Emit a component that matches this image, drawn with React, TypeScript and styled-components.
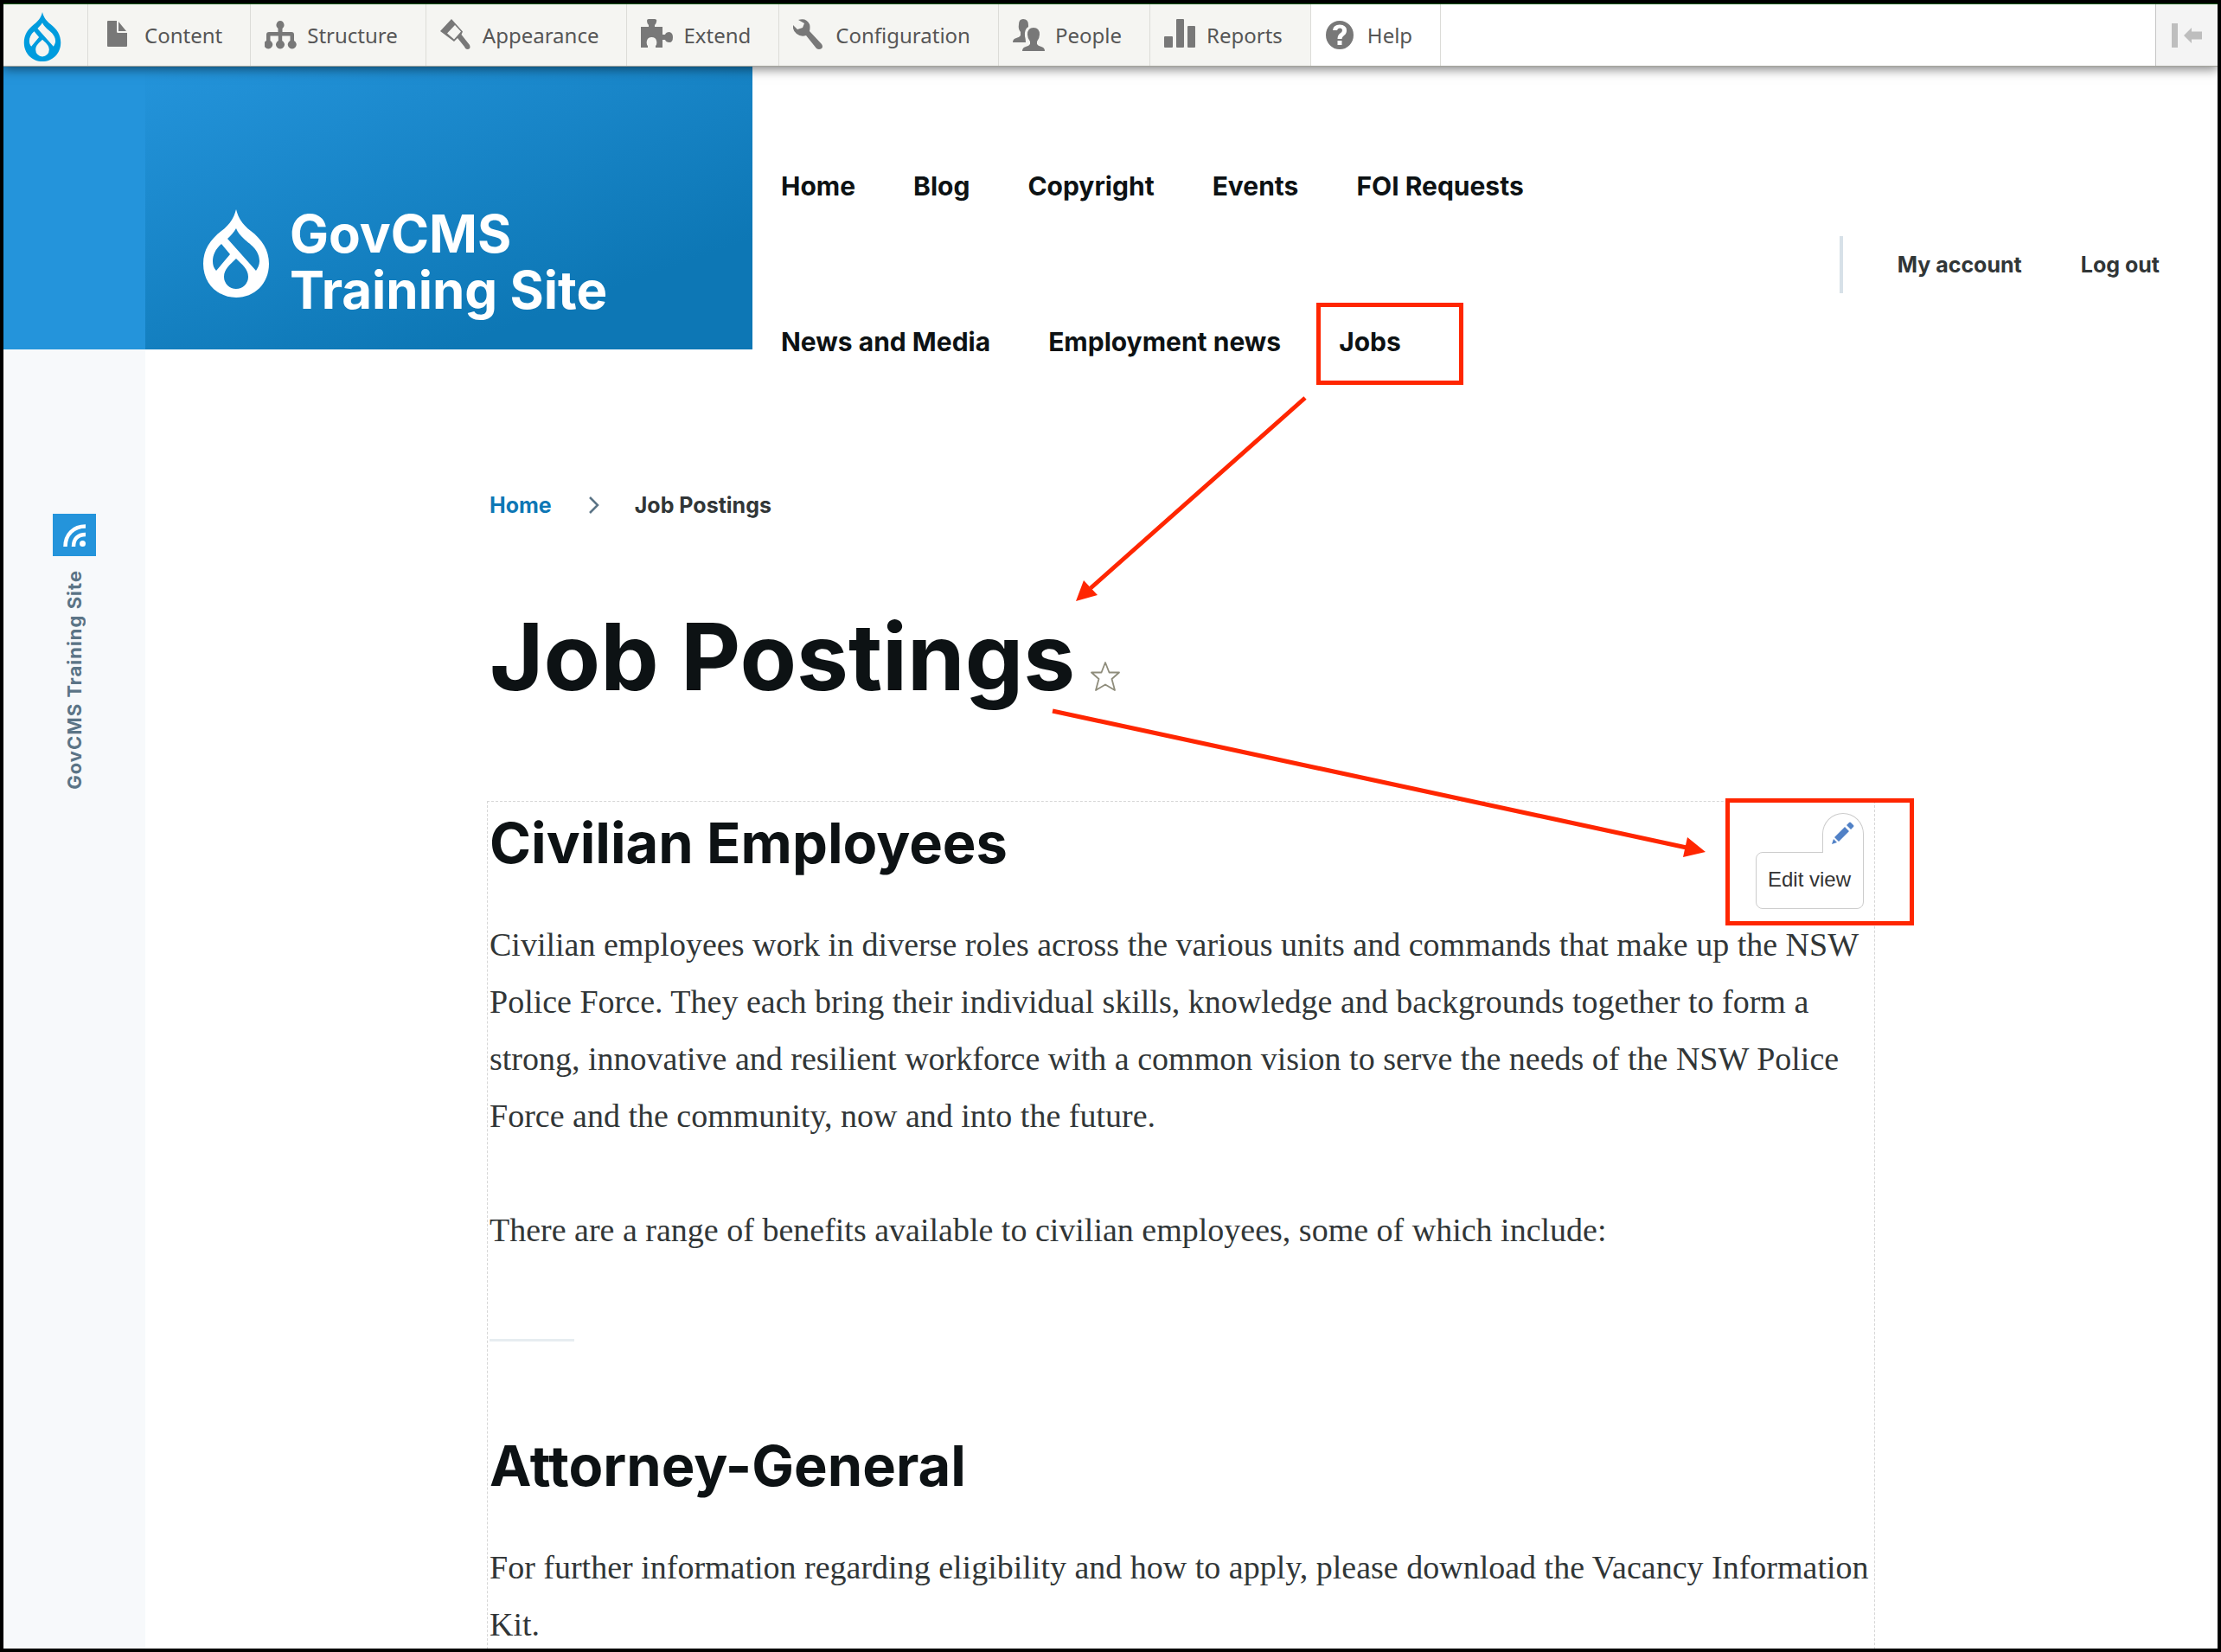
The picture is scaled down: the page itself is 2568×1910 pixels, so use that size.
import React from "react";
import styled, { createGlobalStyle } from "styled-components";

const heading = `Inter, "Open Sans", sans-serif`;
const red = "#ff2600";

const GlobalStyle = createGlobalStyle`
  *, *::before, *::after { box-sizing: border-box; }
  body { margin: 0; background: #fff; }
  a { color: inherit; text-decoration: none; }
  h1, h2, p, ol, ul { margin: 0; padding: 0; }
  ol, ul { list-style: none; }
`;

const Frame = styled.div`
  display: flex;
  flex-direction: column;
  height: 100vh;
  border: 4px solid #000;
  overflow: hidden;
`;

/* Admin toolbar */

const Toolbar = styled.nav`
  position: relative;
  z-index: 3;
  flex: none;
  display: flex;
  height: 73px;
  background: #fff;
  border-top: 1px solid #0c5a10;
  border-bottom: 1px solid #a4a49c;
  box-shadow: 0 2px 12px 1px rgba(0, 0, 0, 0.5);
  font-family: "Noto Sans", "Open Sans", sans-serif;
  font-size: 24px;
  line-height: 32px;
  color: #565656;
`;

const ToolbarHome = styled.a`
  width: 98px;
  padding: 9px 0 0 23px;
  background: #f5f5f2;
  border-right: 1px solid #dcdcd8;
  && { color: #009cde; }
`;

const ToolbarTab = styled.a<{ $active?: boolean }>`
  display: flex;
  align-items: center;
  gap: 11px;
  padding: 0 32px 0 16px;
  background: ${(p) => (p.$active ? "#fff" : "#f5f5f2")};
  border-right: 1px solid #dcdcd8;
  svg { flex: none; }
`;

const ToolbarToggle = styled.button`
  margin-left: auto;
  width: 72px;
  padding: 0;
  background: #f4f4f4;
  border: 0;
  border-left: 1px solid #c4c4c4;
  display: grid;
  place-items: center;
`;

/* Page */

const Page = styled.div`
  position: relative;
  flex: 1;
  min-height: 0;
  display: grid;
  grid-template-columns: 164px minmax(0, 1fr);
  overflow-y: auto;
  scrollbar-width: none;
`;

const Sidebar = styled.aside`
  background: #f7f9fb;
  display: flex;
  flex-direction: column;
  align-items: center;
  &::before {
    content: "";
    width: 100%;
    height: 327px;
    background: #2494db;
  }
`;

const RssLink = styled.a`
  display: grid;
  place-items: center;
  width: 50px;
  height: 49px;
  margin: 190px 0 16px;
  background: #2494db;
`;

const SidebarText = styled.span`
  writing-mode: vertical-rl;
  transform: rotate(180deg);
  font: 700 22px/28px ${heading};
  letter-spacing: 1px;
  color: #5b7486;
`;

const Header = styled.header`
  display: flex;
  align-items: center;
`;

const Brand = styled.a`
  align-self: flex-start;
  flex: none;
  display: flex;
  align-items: flex-end;
  gap: 24px;
  width: 702px;
  height: 327px;
  padding: 0 0 36px 67px;
  background: linear-gradient(160deg, #2494db 0%, #0d77b5 78%);
  && { color: #fff; }
  font: 700 60px/65px ${heading};
  svg { margin-bottom: 24px; }
`;

const MainMenu = styled.nav`
  flex: 1;
  padding: 48px 130px 0 33px;
  font: 700 30px/32px ${heading};
  color: #0d1214;
  ul { display: flex; flex-wrap: wrap; column-gap: 67px; }
  li { display: flex; align-items: center; height: 180px; }
`;

const AccountMenu = styled.nav`
  flex: none;
  display: flex;
  align-items: center;
  gap: 68px;
  height: 66px;
  margin-top: 49px;
  padding: 0 67px 0 63px;
  border-left: 4px solid #d7e1e8;
  font: 700 25px/32px ${heading};
  color: #313637;
`;

const Content = styled.div`
  display: flex;
  flex-direction: column;
`;

const Main = styled.main`
  flex: 1;
  display: flex;
  flex-direction: column;
  width: 100%;
  max-width: 2000px;
  padding-left: 395px;
`;

const Breadcrumb = styled.ol`
  display: flex;
  align-items: center;
  margin: 81px 0 0 3px;
  font: 700 25px/36px ${heading};
  color: #313637;
  a { color: #0d77b5; }
  svg { margin: 0 40px 0 42px; display: block; }
  li { display: flex; align-items: center; }
`;

const TitleRow = styled.div`
  display: flex;
  align-items: flex-end;
  gap: 18px;
  margin: 95px 0 0 3px;
`;

const Title = styled.h1`
  font: 700 107px/124px ${heading};
  color: #0d1214;
`;

const StarButton = styled.button`
  border: 0;
  padding: 0;
  margin-bottom: 22px;
  background: none;
  line-height: 0;
`;

const Region = styled.section`
  position: relative;
  flex: 1;
  margin-top: 105px;
  padding: 8px 2px 0;
  border: 1px dashed #d6d6d6;
  border-bottom: 0;
`;

const Heading = styled.h2`
  font: 700 65px/80px ${heading};
  color: #0d1214;
`;

const Text = styled.p`
  font: 400 38px/66px "Liberation Serif", "Times New Roman", serif;
  color: #313637;
  margin: 44px 0 66px;
  & + & { margin-top: 0; }
`;

const Divider = styled.hr`
  width: 98px;
  height: 3px;
  margin: 93px 0 104px;
  border: 0;
  background: #e7edf1;
`;

const Contextual = styled.div`
  position: absolute;
  top: 13px;
  right: 12px;
  display: flex;
  flex-direction: column;
  align-items: flex-end;
`;

const ContextualTrigger = styled.button`
  position: relative;
  z-index: 1;
  width: 48px;
  height: 46px;
  margin-bottom: -1px;
  padding: 0 0 2px;
  background: #fff;
  border: 1px solid #ccc;
  border-bottom: 0;
  border-radius: 24px 24px 0 0;
  display: grid;
  place-items: center;
`;

const ContextualLink = styled.a`
  padding: 15px 14px 17px 13px;
  background: #fff;
  border: 1px solid #ccc;
  border-radius: 8px 0 8px 8px;
  font: 24px/32px "Liberation Sans", Arial, sans-serif;
  color: #333;
`;

const Annotations = styled.svg`
  position: absolute;
  top: 0;
  left: 0;
  z-index: 2;
  pointer-events: none;
`;

const Drop = ({ width, height }: { width: number; height: number }) => (
  <svg width={width} height={height} viewBox="0 0 76 102" fill="currentColor" fillRule="evenodd" aria-hidden="true">
    <path d="M38 0C41 12 47 19 55 25C68 35 76 47 76 63C76 86 59 102 38 102S0 86 0 63C0 47 8 35 21 25C29 19 35 12 38 0ZM38 22C35 27 32 30 28 34L61 71C63 68 65 64 65 60C65 46 53 40 47 34C43 30 40 27 38 22ZM21 40C14 46 11 53 11 60C11 64 12 68 15 71L31 52ZM38 57C31 64 24 69 24 78A14 14 0 0 0 52 78C52 69 45 64 38 57Z" />
  </svg>
);

const iconPaths: Record<string, React.ReactNode> = {
  Content: <path d="M7 2H17V14.500Q17 16 18.500 16H29V31Q29 32 28 32H7Q6 32 6 31V3Q6 2 7 2ZM19 3L28 14H19Z" />,
  Structure: (
    <path d="M18 2a5 5 0 0 1 2.500 9v4H31a3 3 0 0 1 3 3v7a5 5 0 1 1-4.500 0v-5.500h-9.300V25a5 5 0 1 1-4.400 0v-5.500H6.500V25A5 5 0 1 1 2 25v-7a3 3 0 0 1 3-3h10.500v-4A5 5 0 0 1 18 2Z" />
  ),
  Appearance: (
    <path fillRule="evenodd" d="M13 0L26 14.500L24.500 18L34 30Q36 35 31 35Q29 35 28 32L20 22L16 26L0 14ZM17 7L8 16.500L16 23.500L24 14.500Z" />
  ),
  Extend: (
    <path d="M0 9H9V7Q7 5 7 2Q7 0 9 0H16Q19 0 18 3Q18 5 16 7V9H25V18H28Q29 15 33 15Q37 16 37 21Q37 27 33 27Q29 27 28 24H25V33H17V31Q19 29 18 25Q17 21 12.500 21Q8 21 7 25Q6 29 8 31V33H0Z" />
  ),
  Configuration: (
    <path d="M6 1Q15-2 19 6Q20 9 19 14L33 29Q35 32 33 34Q30 36 27 34L15 19Q9 21 4 17Q-1 13 0 7L5 12L11 10L13 5Z" />
  ),
  People: (
    <path d="M12 0Q18 0 18 7Q18 8 18 9Q13 12 14 20Q15 23 15 27H0Q0 23 4 22Q8 21 9 19V15Q6 12 7 6Q7 0 12 0ZM24 10Q31 10 31 18Q31 22 28 26V29Q29 31 33 32Q37 33 37 37H11Q11 33 15 32Q19 31 20 29V26Q17 22 17 18Q17 10 24 10Z" />
  ),
  Reports: (
    <>
      <rect x="0" y="20" width="10" height="13" rx="1" />
      <rect x="14" y="0" width="9" height="33" rx="1" />
      <rect x="27" y="8" width="9" height="25" rx="1" />
    </>
  ),
  Help: (
    <path fillRule="evenodd" d="M17 2a16 16.500 0 1 1 0 33a16 16.500 0 0 1 0-33ZM9 13H14Q14.500 10.500 17 10.500Q20 10.500 20 13Q20 15 17.500 16.500Q14.500 18.500 14.500 23H19.500Q19.500 21 22 19Q25 17 25 13Q25 7 17 6.500Q9.500 6.500 9 13ZM14.500 25V30H19.500V25Z" />
  ),
};

const tabs = ["Content", "Structure", "Appearance", "Extend", "Configuration", "People", "Reports", "Help"];
const menu = ["Home", "Blog", "Copyright", "Events", "FOI Requests", "News and Media", "Employment news", "Jobs"];

export default function App() {
  return (
    <Frame>
      <GlobalStyle />
      <Toolbar aria-label="Administration">
        <ToolbarHome href="#" aria-label="Go to administration">
          <Drop width={44} height={57} />
        </ToolbarHome>
        {tabs.map((name) => (
          <ToolbarTab key={name} href="#" $active={name === "Help"}>
            <svg width="38" height="38" viewBox="0 0 38 38" fill="#787878" aria-hidden="true">
              {iconPaths[name]}
            </svg>
            {name}
          </ToolbarTab>
        ))}
        <ToolbarToggle type="button" aria-label="Vertical orientation">
          <svg width="36" height="28" viewBox="0 0 36 28" fill="#bebebe">
            <path d="M0 0H7V28H0ZM14 14L23 5V9.500H35V18.500H23V23Z" />
          </svg>
        </ToolbarToggle>
      </Toolbar>

      <Page>
        <Sidebar>
          <RssLink href="#" aria-label="RSS feed">
            <svg width="26" height="26" viewBox="0 0 26 26" fill="none" stroke="#fff" strokeWidth="4.500">
              <path d="M2.500 26C2.500 12 12 2.500 26 2.500M12 26C12 17 17 12 26 12" />
              <circle cx="22.500" cy="22.500" r="3.500" fill="#fff" stroke="none" />
            </svg>
          </RssLink>
          <SidebarText>GovCMS Training Site</SidebarText>
        </Sidebar>

        <Content>
          <Header>
            <Brand href="#">
              <Drop width={76} height={102} />
              <span>
                GovCMS
                <br />
                Training Site
              </span>
            </Brand>
            <MainMenu aria-label="Main navigation">
              <ul>
                {menu.map((item) => (
                  <li key={item}>
                    <a href="#">{item}</a>
                  </li>
                ))}
              </ul>
            </MainMenu>
            <AccountMenu aria-label="User account">
              <a href="#">My account</a>
              <a href="#">Log out</a>
            </AccountMenu>
          </Header>

          <Main>
            <Breadcrumb>
              <li>
                <a href="#">Home</a>
              </li>
              <li>
                <svg width="14" height="20" viewBox="0 0 14 20" fill="none" stroke="#5b7486" strokeWidth="2.500">
                  <path d="M2 1L11 10L2 19" />
                </svg>
                Job Postings
              </li>
            </Breadcrumb>
            <TitleRow>
              <Title>Job Postings</Title>
              <StarButton type="button" aria-label="Add to shortcuts">
                <svg width="34" height="34" viewBox="0 0 34 34" fill="#fff" stroke="#8f8d7c" strokeWidth="1.800" strokeLinejoin="round">
                  <path d="M17 1L21.500 12.500H33L24.500 20L28 33L17 26.500L6 33L9.500 20L1 12.500H12.500Z" />
                </svg>
              </StarButton>
            </TitleRow>

            <Region>
              <Contextual>
                <ContextualTrigger type="button" aria-label="Open configuration options">
                  <svg width="26" height="26" viewBox="0 0 26 26" fill="#5181c6">
                    <path d="M0 26L2 20L6 24ZM3 18L15 6L20 11L8 23ZM17 4L20 1Q21 0 22 1L25 4Q26 5 25 6L22 9Z" />
                  </svg>
                </ContextualTrigger>
                <ContextualLink href="#">Edit view</ContextualLink>
              </Contextual>
              <Heading>Civilian Employees</Heading>
              <Text>
                Civilian employees work in diverse roles across the various units and commands that make up the NSW
                Police Force. They each bring their individual skills, knowledge and backgrounds together to form a
                strong, innovative and resilient workforce with a common vision to serve the needs of the NSW Police
                Force and the community, now and into the future.
              </Text>
              <Text>There are a range of benefits available to civilian employees, some of which include:</Text>
              <Divider />
              <Heading>Attorney-General</Heading>
              <Text>
                For further information regarding eligibility and how to apply, please download the Vacancy Information
                Kit.
              </Text>
            </Region>
          </Main>
        </Content>

        <Annotations width="2240" height="1020" viewBox="4 77 2240 1020" fill="none" stroke={red} strokeWidth="5" aria-hidden="true">
          <rect x="1524.500" y="352.500" width="165" height="90" />
          <rect x="1997.500" y="925.500" width="213" height="142" />
          <path d="M1509 460L1261 680M1217 822L1950 980" />
          <path d="M1244 695L1253 671L1269 688ZM1972 985L1946 991L1951 968Z" fill={red} stroke="none" />
        </Annotations>
      </Page>
    </Frame>
  );
}
